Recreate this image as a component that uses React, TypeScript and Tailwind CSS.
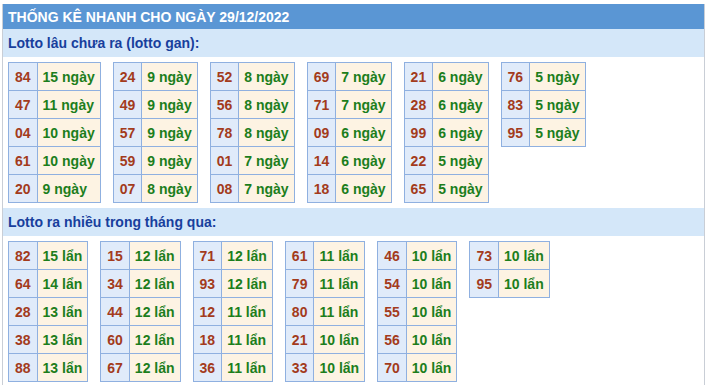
import React from 'react';

type Row = [string, number];

const ganCols: Row[][] = [
  [['84', 15], ['47', 11], ['04', 10], ['61', 10], ['20', 9]],
  [['24', 9], ['49', 9], ['57', 9], ['59', 9], ['07', 8]],
  [['52', 8], ['56', 8], ['78', 8], ['01', 7], ['08', 7]],
  [['69', 7], ['71', 7], ['09', 6], ['14', 6], ['18', 6]],
  [['21', 6], ['28', 6], ['99', 6], ['22', 5], ['65', 5]],
  [['76', 5], ['83', 5], ['95', 5]],
];

const nhieuCols: Row[][] = [
  [['82', 15], ['64', 14], ['28', 13], ['38', 13], ['88', 13]],
  [['15', 12], ['34', 12], ['44', 12], ['60', 12], ['67', 12]],
  [['71', 12], ['93', 12], ['12', 11], ['18', 11], ['36', 11]],
  [['61', 11], ['79', 11], ['80', 11], ['21', 10], ['33', 10]],
  [['46', 10], ['54', 10], ['55', 10], ['56', 10], ['70', 10]],
  [['73', 10], ['95', 10]],
];

function StatTable({ rows, unit }: { rows: Row[]; unit: string }) {
  return (
    <table className="border-collapse">
      <tbody>
        {rows.map(([num, count]) => (
          <tr key={num}>
            <td className="h-[28px] p-0 px-[6px] border border-[#8fb0e0] bg-[#e0ebfa] text-[#a33b1c] text-center">
              {num}
            </td>
            <td className="h-[28px] p-0 pl-[5px] pr-[5px] border border-[#8fb0e0] bg-[#fdf3e3] text-[#1c7e1c] text-left whitespace-nowrap">
              {count} {unit}
            </td>
          </tr>
        ))}
      </tbody>
    </table>
  );
}

function Section({ title, cols, unit }: { title: string; cols: Row[][]; unit: string }) {
  return (
    <div>
      <div className="h-[28px] flex items-center px-[5px] bg-[#d4e7f9] text-[#183f9d] text-[14px] font-bold">
        {title}
      </div>
      <div className="flex items-start gap-[12px] px-[5px] pt-[5px] pb-[5px]">
        {cols.map((rows, i) => (
          <StatTable key={i} rows={rows} unit={unit} />
        ))}
      </div>
    </div>
  );
}

export default function App() {
  return (
    <div className="bg-white w-[709px] h-[385px] overflow-hidden pt-[4px]" style={{ fontFamily: '"Liberation Sans", Arial, sans-serif' }}>
      <div className="ml-[2px] w-[703px] border-x border-[#c9ced6] text-[14px] font-bold leading-[16px]">
        {/* Header */}
        <div className="h-[25px] flex items-center px-[5px] bg-[#5a96d4] text-white text-[14px] font-bold">
          THỐNG KÊ NHANH CHO NGÀY 29/12/2022
        </div>

        <Section title="Lotto lâu chưa ra (lotto gan):" cols={ganCols} unit="ngày" />
        <Section title="Lotto ra nhiều trong tháng qua:" cols={nhieuCols} unit="lẩn" />
      </div>
    </div>
  );
}
